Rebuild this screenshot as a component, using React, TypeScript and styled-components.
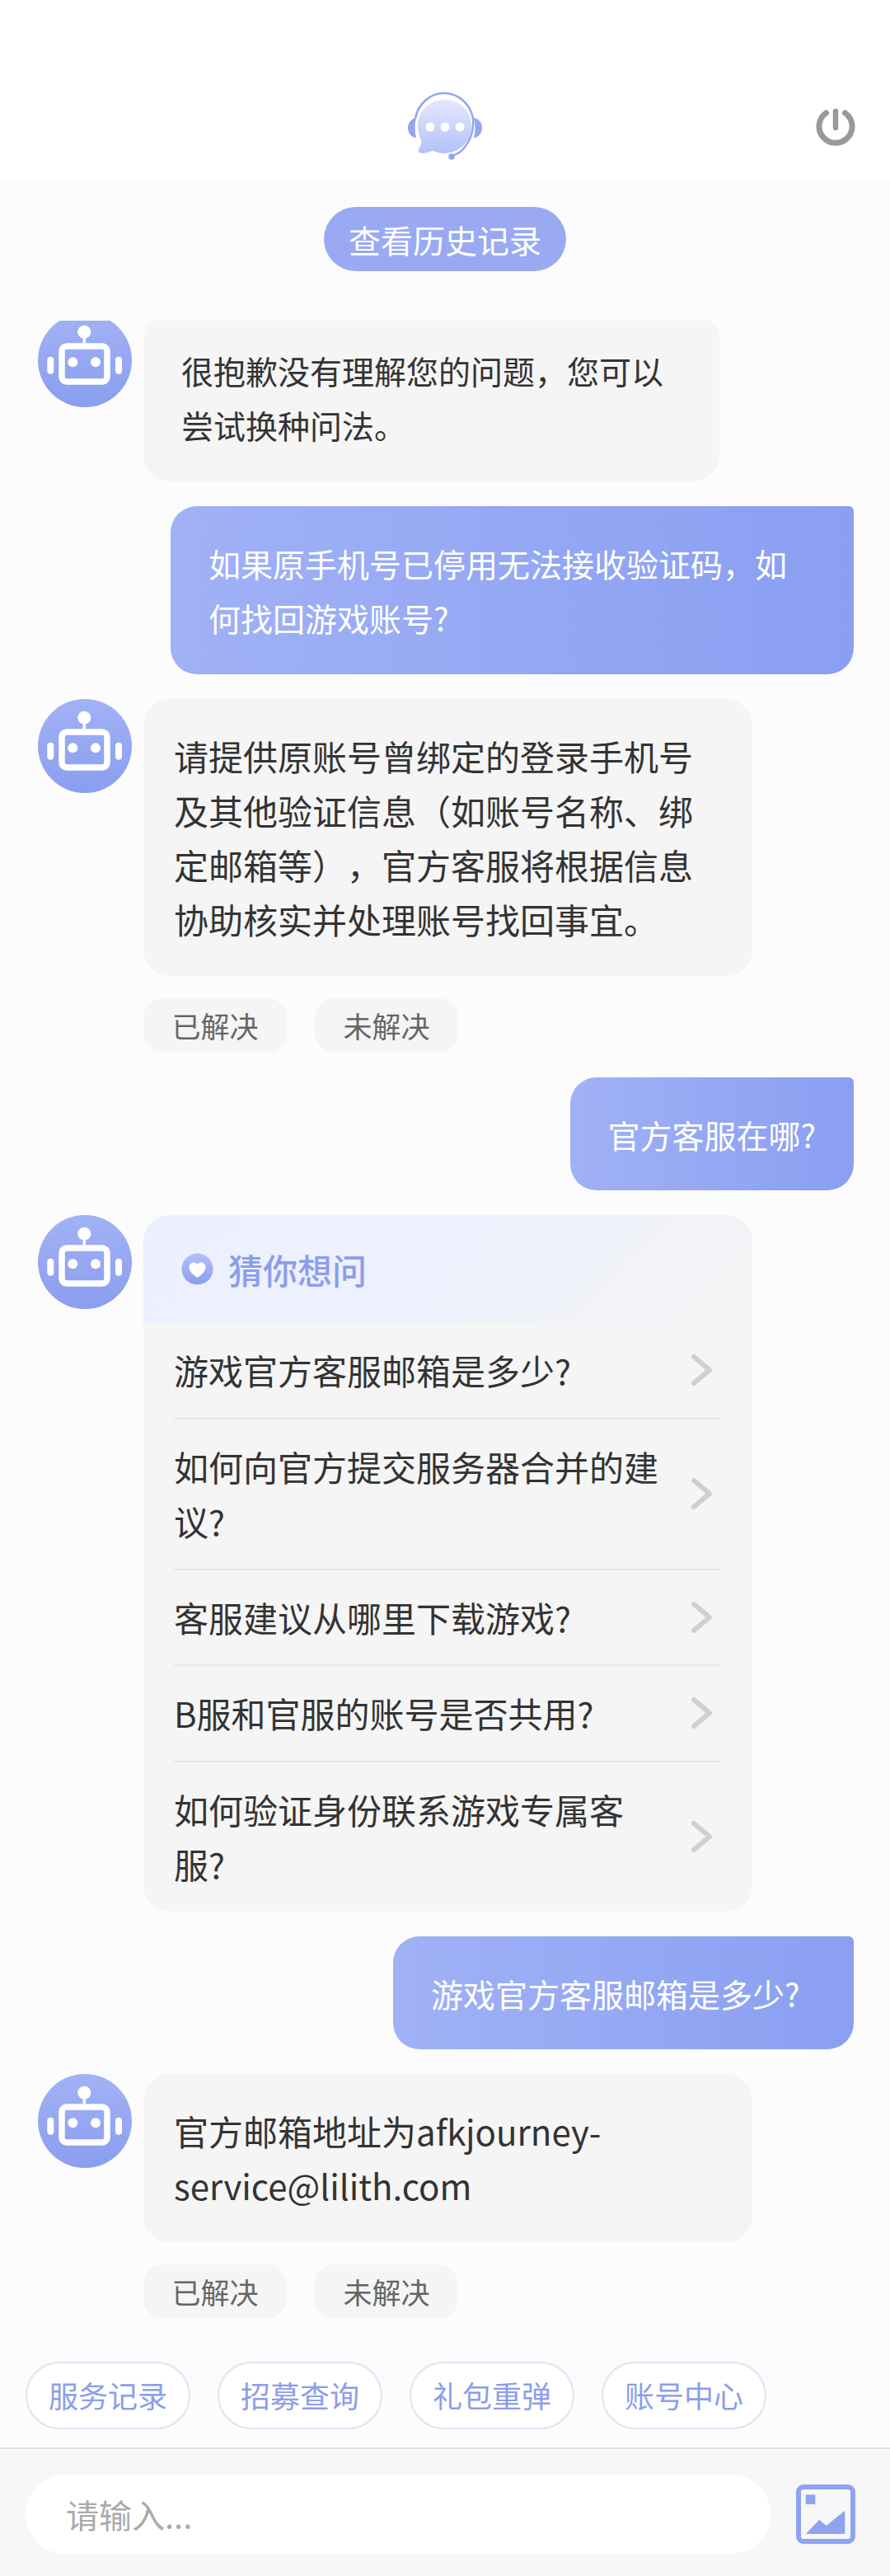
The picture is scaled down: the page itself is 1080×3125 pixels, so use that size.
import React from 'react';
import styled, { createGlobalStyle } from 'styled-components';

const GlobalStyle = createGlobalStyle`
  * { box-sizing: border-box; }
  html, body { margin: 0; padding: 0; background: #fcfcfc; }
  body { font-family: "Noto Sans CJK SC", "Noto Sans", sans-serif; text-spacing-trim: space-all; }
`;

const questions = [
  '游戏官方客服邮箱是多少?',
  '如何向官方提交服务器合并的建议?',
  '客服建议从哪里下载游戏?',
  'B服和官服的账号是否共用?',
  '如何验证身份联系游戏专属客服?',
];

const shortcuts = ['服务记录', '招募查询', '礼包重弹', '账号中心'];

const LogoIcon = () => (
  <svg width="100" height="90" viewBox="90 28 100 90" fill="none">
    <defs>
      <linearGradient id="logoFill" x1="0" y1="0" x2="0" y2="1">
        <stop offset="0" stopColor="#e4e8fc" />
        <stop offset="1" stopColor="#b4c1f7" />
      </linearGradient>
    </defs>
    <path
      d="M139 41c-18 0-32 14.500-32 32 0 7 2 13 4 17 1 3-1 8-3 11-1 3 1 5 4 5 6 0 10-3 14-3 4 2 8 3 13 3 18 0 33-14 33-33s-15-32-33-32z"
      fill="url(#logoFill)"
    />
    <circle cx="122" cy="74" r="5.500" fill="#fff" />
    <circle cx="140" cy="74" r="5.500" fill="#fff" />
    <circle cx="158" cy="74" r="5.500" fill="#fff" />
    <path
      d="M104 64c3-18 18-31 35-31s32 13 35 31c2 20-10 42-26 45"
      stroke="#93a6f2"
      strokeWidth="2.500"
      strokeLinecap="round"
    />
    <path d="M105 63c-6 1-10 6-10 12s4 12 10 12c-2-8-2-16 0-24z" fill="#93a6f2" />
    <path d="M175 63c6 1 10 6 10 12s-4 12-10 12c2-8 2-16 0-24z" fill="#93a6f2" />
    <circle cx="148" cy="110" r="3.800" fill="#93a6f2" />
  </svg>
);

const PowerIcon = () => (
  <svg width="48" height="48" viewBox="0 0 48 48" fill="none" stroke="#999" strokeLinecap="round">
    <path d="M12.500 8a20 20 0 1 0 23 0" strokeWidth="7" />
    <path d="M24 6v20" strokeWidth="6.500" />
  </svg>
);

const RobotIcon = () => (
  <svg width="114" height="114" viewBox="0 0 114 114">
    <rect x="29" y="40" width="55" height="43" rx="6" fill="none" stroke="#fff" strokeWidth="7.500" />
    <rect x="54.500" y="26" width="3.500" height="10" fill="#fff" />
    <circle cx="56.300" cy="22.700" r="8" fill="#fff" />
    <circle cx="42.300" cy="59.300" r="6" fill="#fff" />
    <circle cx="70" cy="59.300" r="6" fill="#fff" />
    <rect x="11.300" y="52.700" width="8" height="21" rx="4" fill="#fff" />
    <rect x="94" y="52.700" width="8" height="21" rx="4" fill="#fff" />
  </svg>
);

const HeartIcon = () => (
  <svg width="39" height="39" viewBox="0 0 39 39">
    <defs>
      <linearGradient id="heartFill" x1="0" y1="0" x2="0" y2="1">
        <stop offset="0" stopColor="#b3c0f6" />
        <stop offset="1" stopColor="#8a9eef" />
      </linearGradient>
    </defs>
    <circle cx="19.500" cy="19.500" r="19" fill="url(#heartFill)" />
    <path
      d="M19.500 30c-5-3.500-10-7.500-10-12.500 0-3.500 2.500-6 5.500-6 2 0 3.500 1 4.500 2.500 1-1.500 2.500-2.500 4.500-2.500 3 0 5.500 2.500 5.500 6 0 5-5 9-10 12.500z"
      fill="#fff"
    />
  </svg>
);

const ChevronIcon = () => (
  <svg width="26" height="38" viewBox="0 0 26 38" fill="none">
    <path d="M3 3l19 16L3 35" stroke="#cfcfcf" strokeWidth="6" strokeLinecap="round" strokeLinejoin="round" />
  </svg>
);

const ImageIcon = () => (
  <svg width="72" height="72" viewBox="0 0 72 72">
    <rect x="3" y="3" width="66" height="66" rx="6" fill="none" stroke="#8fa3f2" strokeWidth="6" />
    <rect x="11.700" y="12.300" width="11.600" height="11.700" fill="#8fa3f2" />
    <path d="M11.700 60L28.300 42.700L36.700 50L59.300 31.700V60z" fill="#8fa3f2" />
  </svg>
);

export default function App() {
  return (
    <Page>
      <GlobalStyle />
      <Header>
        <LogoSlot>
          <LogoIcon />
        </LogoSlot>
        <PowerSlot>
          <PowerIcon />
        </PowerSlot>
      </Header>
      <HistoryButton>查看历史记录</HistoryButton>
      <MessageList>
        <BotRow>
          <Avatar>
            <RobotIcon />
          </Avatar>
          <BotBubble $first>很抱歉没有理解您的问题，您可以尝试换种问法。</BotBubble>
        </BotRow>
        <UserBubble>如果原手机号已停用无法接收验证码，如何找回游戏账号?</UserBubble>
        <BotGroup>
          <BotRow>
            <Avatar>
              <RobotIcon />
            </Avatar>
            <BotBubble>请提供原账号曾绑定的登录手机号及其他验证信息（如账号名称、绑定邮箱等），官方客服将根据信息协助核实并处理账号找回事宜。</BotBubble>
          </BotRow>
          <Feedback>
            <FeedbackButton>已解决</FeedbackButton>
            <FeedbackButton>未解决</FeedbackButton>
          </Feedback>
        </BotGroup>
        <UserBubble>官方客服在哪?</UserBubble>
        <BotRow>
          <Avatar>
            <RobotIcon />
          </Avatar>
          <QuestionCard>
            <CardTitle>
              <HeartIcon />
              猜你想问
            </CardTitle>
            <QuestionList>
              {questions.map((q) => (
                <QuestionRow key={q}>
                  <QuestionText>{q}</QuestionText>
                  <ChevronIcon />
                </QuestionRow>
              ))}
            </QuestionList>
          </QuestionCard>
        </BotRow>
        <UserBubble $width={559}>游戏官方客服邮箱是多少?</UserBubble>
        <BotGroup>
          <BotRow>
            <Avatar>
              <RobotIcon />
            </Avatar>
            <BotBubble>官方邮箱地址为afkjourney-service@lilith.com</BotBubble>
          </BotRow>
          <Feedback>
            <FeedbackButton>已解决</FeedbackButton>
            <FeedbackButton>未解决</FeedbackButton>
          </Feedback>
        </BotGroup>
      </MessageList>
      <Shortcuts>
        {shortcuts.map((s) => (
          <Chip key={s}>{s}</Chip>
        ))}
      </Shortcuts>
      <Footer>
        <InputBox>请输入...</InputBox>
        <ImageButton>
          <ImageIcon />
        </ImageButton>
      </Footer>
    </Page>
  );
}

const Page = styled.div`
  display: flex;
  flex-direction: column;
  width: 1080px;
  height: 3125px;
  overflow: hidden;
  background: #fcfcfc;
`;

const Header = styled.header`
  flex: none;
  display: grid;
  grid-template-columns: 1fr auto 1fr;
  align-items: center;
  height: 220px;
  padding: 86px 42px 0;
  background: #fff;
`;

const LogoSlot = styled.div`
  grid-column: 2;
  display: flex;
`;

const PowerSlot = styled.div`
  grid-column: 3;
  justify-self: end;
  display: flex;
`;

const HistoryButton = styled.div`
  flex: none;
  align-self: center;
  width: 294px;
  height: 78px;
  margin: 31px 0 60px;
  border-radius: 39px;
  background: #99aaf3;
  color: #fff;
  font-size: 39px;
  line-height: 78px;
  text-align: center;
`;

const MessageList = styled.main`
  flex: 1;
  min-height: 0;
  overflow: hidden;
  display: flex;
  flex-direction: column;
  justify-content: flex-end;
  gap: 30px;
  padding: 0 44px 0 46px;
`;

const BotGroup = styled.div`
  flex: none;
  display: flex;
  flex-direction: column;
  gap: 27px;
`;

const BotRow = styled.div`
  flex: none;
  display: flex;
  align-items: flex-start;
  gap: 14px;
`;

const Avatar = styled.div`
  flex: none;
  display: flex;
  width: 114px;
  height: 114px;
  border-radius: 50%;
  background: linear-gradient(180deg, #a2b2f5 0%, #8a9eef 100%);
`;

const BotBubble = styled.div<{ $first?: boolean }>`
  width: ${({ $first }) => ($first ? '699px' : '739px')};
  padding: ${({ $first }) => ($first ? '36px 46px' : '36px 37px')};
  border-radius: 32px;
  background: #f5f5f5;
  color: #333;
  font-size: ${({ $first }) => ($first ? '39px' : '42px')};
  line-height: 66px;
`;

const UserBubble = styled.div<{ $width?: number }>`
  flex: none;
  align-self: flex-end;
  width: ${({ $width }) => ($width ? `${$width}px` : 'auto')};
  max-width: 829px;
  padding: 36px 46px 35px;
  border-radius: 32px 6px 32px 32px;
  background: linear-gradient(90deg, #a0b1f6 0%, #8a9ff2 100%);
  color: #fff;
  font-size: 39px;
  line-height: 66.5px;
`;

const Feedback = styled.div`
  display: flex;
  gap: 34px;
  padding-left: 128px;
`;

const FeedbackButton = styled.div`
  width: 174px;
  height: 66px;
  border-radius: 24px;
  background: #f5f5f5;
  color: #666;
  font-size: 35px;
  line-height: 66px;
  text-align: center;
`;

const QuestionCard = styled.div`
  width: 739px;
  border-radius: 32px;
  overflow: hidden;
  background: #f5f5f5;
`;

const CardTitle = styled.div`
  display: flex;
  align-items: center;
  gap: 18px;
  height: 131px;
  padding-left: 46px;
  background: linear-gradient(135deg, #ecf0fe 0%, #eef1fd 50%, #f5f5f5 100%);
  color: #8c9eea;
  font-size: 42px;
  font-weight: 500;
`;

const QuestionList = styled.div`
  padding: 0 38px 0 37px;
`;

const QuestionRow = styled.div`
  display: flex;
  align-items: center;
  justify-content: space-between;
  padding: 24px 10px 24px 0;
  border-bottom: 2px solid #e8e8e8;

  &:last-child {
    border-bottom: none;
  }
`;

const QuestionText = styled.div`
  width: 600px;
  color: #333;
  font-size: 42px;
  line-height: 66.5px;
`;

const Shortcuts = styled.div`
  flex: none;
  display: flex;
  gap: 33px;
  margin: 52px 0 22px;
  padding-left: 31px;
`;

const Chip = styled.div`
  width: 200px;
  height: 82px;
  border: 2.5px solid #dfe3f7;
  border-radius: 41px;
  background: #fff;
  color: #8c9eea;
  font-size: 36px;
  line-height: 77px;
  text-align: center;
`;

const Footer = styled.footer`
  flex: none;
  display: flex;
  align-items: center;
  gap: 31px;
  height: 156px;
  padding: 31px 0 27px 31px;
  border-top: 2px solid #e2e2e2;
  background: #f7f7f7;
`;

const InputBox = styled.div`
  width: 904px;
  height: 96px;
  padding-left: 49px;
  border-radius: 48px;
  background: #fff;
  color: #aaa;
  font-size: 40px;
  line-height: 96px;
`;

const ImageButton = styled.div`
  display: flex;
`;
